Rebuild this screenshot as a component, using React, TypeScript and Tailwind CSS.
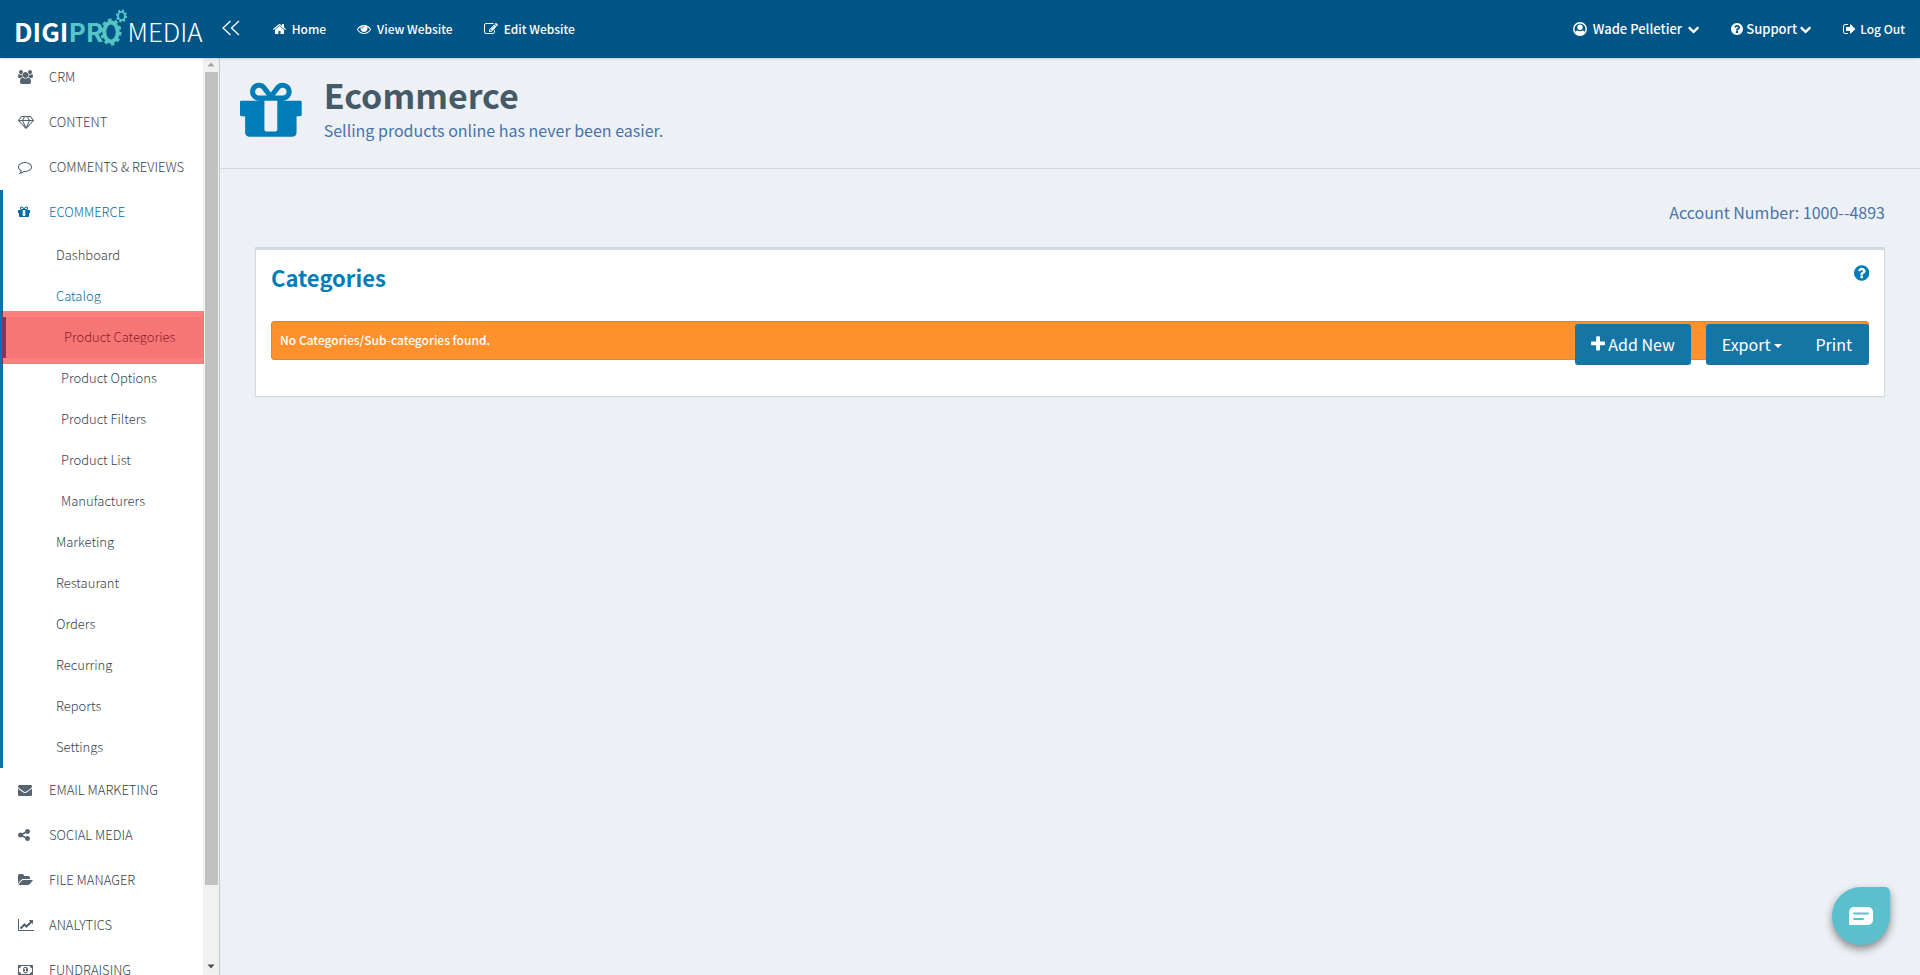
import React from 'react';

interface IconProps {
    name: keyof typeof icons;
    className?: string;
}

// [viewBox, path]
const icons = {
    users: ['-64 0 1920 1792', 'M529 896q-162 5-265 128h-134q-82 0-138-40.5t-56-118.5q0-353 124-353 6 0 43.5 21t97.5 42.5 119 21.5q67 0 133-23-5 37-5 66 0 139 81 256zm1071 637q0 120-73 189.5t-194 69.5h-874q-121 0-194-69.5t-73-189.5q0-53 3.5-103.5t14-109 26.5-108.5 43-97.5 62-81 85.5-53.5 111.5-20q10 0 43 21.5t73 48 107 48 135 21.5 135-21.5 107-48 73-48 43-21.5q61 0 111.5 20t85.5 53.5 62 81 43 97.5 26.5 108.5 14 109 3.5 103.5zm-1024-1277q0 106-75 181t-181 75-181-75-75-181 75-181 181-75 181 75 75 181zm704 384q0 159-112.5 271.5t-271.5 112.5-271.5-112.5-112.5-271.5 112.5-271.5 271.5-112.5 271.5 112.5 112.5 271.5zm576 225q0 78-56 118.5t-138 40.5h-134q-103-123-265-128 81-117 81-256 0-29-5-66 66 23 133 23 59 0 119-21.5t97.5-42.5 43.5-21q124 0 124 353zm-128-609q0 106-75 181t-181 75-181-75-75-181 75-181 181-75 181 75 75 181z'],
    diamond: ['0 0 2048 1792', 'M212 768l623 665-300-665h-323zM1024 1540l349-772h-698zM538 640l204-384h-262l-288 384h346zM1213 1433l623-665h-323zM683 640h682l-204-384h-274zM1510 640h346l-288-384h-262zM1651 154l384 512q14 18 13 41.500t-17 40.500l-960 1024q-18 20-47 20t-47-20l-960-1024q-16-17-17-40.500t13-41.500l384-512q18-26 51-26h1152q33 0 51 26z'],
    comment: ['0 0 1792 1792', 'M896 384q-204 0-381.5 69.5t-282 187.5-104.5 255q0 112 71.5 213.500t201.500 175.500l87 50-27 96q-24 91-70 172 152-63 275-171l43-38 57 6q69 8 130 8 204 0 381.500-69.500t282-187.500 104.500-255-104.500-255-282-187.500-381.500-69.500zm896 512q0 174-120 321.500t-326 233-450 85.500q-70 0-145-8-198 175-460 242-49 14-114 22h-5q-15 0-27-10.500t-16-27.500v-1q-3-4-.5-12t2-10 4.500-9.500l6-9 7-8.500 8-9q7-8 31-34.500t34.500-38 31-39.500 32.500-51 27-59 26-76q-157-89-247.500-220t-90.500-281q0-174 120-321.500t326-233 450-85.500 450 85.500 326 233 120 321.500z'],
    gift: ['128 0 1536 1792', 'M1056 1356v-716h-320v716q0 25 18 38.500t46 13.500h192q28 0 46-13.500t18-38.500zm-456-844h195l-126-161q-26-31-69-31-40 0-68 28t-28 68 28 68 68 28zm688-96q0-40-28-68t-68-28q-43 0-69 31l-125 161h194q40 0 68-28t28-68zm376 256v320q0 14-9 23t-23 9h-96v416q0 40-28 68t-68 28h-1088q-40 0-68-28t-28-68v-416h-96q-14 0-23-9t-9-23v-320q0-14 9-23t23-9h440q-93 0-158.500-65.500t-65.500-158.500 65.500-158.500 158.500-65.500q107 0 168 77l128 165 128-165q61-77 168-77 93 0 158.500 65.500t65.500 158.500-65.500 158.500-158.500 65.500h440q14 0 23 9t9 23z'],
    envelope: ['0 0 1792 1792', 'M1792 710v794q0 66-47 113t-113 47h-1472q-66 0-113-47t-47-113v-794q44 49 101 87 362 246 497 345 57 42 92.500 65.500t94.500 48 110 24.500h2q51 0 110-24.500t94.500-48 92.500-65.500q170-123 498-345 57-39 100-87zm0-294q0 79-49 151t-122 123q-376 261-468 325-10 7-42.500 30.500t-54 38-52 32.500-57.500 27-50 9h-2q-23 0-50-9t-57.500-27-52-32.500-54-38-42.500-30.500q-91-64-262-182.500t-205-142.500q-62-42-117-115.500t-55-136.500q0-78 41.500-130t118.500-52h1472q65 0 112.500 47t47.500 113z'],
    share: ['128 0 1536 1792', 'M1344 1024q133 0 226.500 93.500t93.500 226.500-93.500 226.500-226.500 93.500-226.500-93.500-93.500-226.500q0-12 2-34l-360-180q-92 86-218 86-133 0-226.500-93.500t-93.500-226.500 93.500-226.500 226.500-93.500q126 0 218 86l360-180q-2-22-2-34 0-133 93.500-226.500t226.500-93.500 226.500 93.500 93.500 226.500-93.500 226.500-226.500 93.500q-126 0-218-86l-360 180q2 22 2 34t-2 34l360 180q92-86 218-86z'],
    folder: ['0 0 1920 1792', 'M1879 952q0 31-31 66l-336 396q-43 51-120.500 86.500t-143.500 35.500h-1088q-34 0-60.500-13t-26.500-43q0-31 31-66l336-396q43-51 120.500-86.500t143.500-35.500h1088q34 0 60.500 13t26.500 43zm-343-344v160h-832q-94 0-197 47.500t-164 119.500l-337 396-5 6q0-4-.5-12.500t-.5-12.500v-960q0-92 66-158t158-66h320q92 0 158 66t66 158v32h544q92 0 158 66t66 158z'],
    chart: ['0 0 2048 1792', 'M2048 1536v128h-2048v-1536h128v1408h1920zm-128-1248v435q0 21-19.500 29.500t-35.500-7.500l-121-121-633 633q-10 10-23 10t-23-10l-233-233-416 416-192-192 585-585q10-10 23-10t23 10l233 233 464-464-121-121q-16-16-7.500-35.500t29.500-19.500h435q14 0 23 9t9 23z'],
    money: ['0 0 1920 1792', 'M768 1152h384v-96h-128v-448h-114l-148 137 77 80q42-37 55-57h2v288h-128v96zm512-256q0 70-21 142t-59.500 134-101.500 101-138 39-138-39-101.500-101-59.500-134-21-142 21-142 59.500-134 101.500-101 138-39 138 39 101.500 101 59.500 134 21 142zm512 256v-512q-106 0-181-75t-75-181h-1152q0 106-75 181t-181 75v512q106 0 181 75t75 181h1152q0-106 75-181t181-75zm128-832v1152q0 26-19 45t-45 19h-1792q-26 0-45-19t-19-45v-1152q0-26 19-45t45-19h1792q26 0 45 19t19 45z'],
    home: ['64 0 1664 1792', 'M1472 992v480q0 26-19 45t-45 19h-384v-384h-256v384h-384q-26 0-45-19t-19-45v-480q0-1 .5-3t.5-3l575-474 575 474q1 2 1 6zm223-69l-62 74q-8 9-21 11h-3q-13 0-21-7l-692-577-692 577q-12 8-24 7-13-2-21-11l-62-74q-8-10-7-23.500t11-21.500l719-599q32-26 76-26t76 26l244 204v-195q0-14 9-23t23-9h192q14 0 23 9t9 23v408l219 182q10 8 11 21.500t-7 23.500z'],
    eye: ['0 0 1792 1792', 'M1664 960q-152-236-381-353 61 104 61 225 0 185-131.500 316.500t-316.500 131.500-316.500-131.500-131.500-316.500q0-121 61-225-229 117-381 353 133 205 333.500 326.500t434.500 121.500 434.500-121.500 333.500-326.500zm-720-384q0-20-14-34t-34-14q-125 0-214.500 89.500t-89.500 214.500q0 20 14 34t34 14 34-14 14-34q0-86 61-147t147-61q20 0 34-14t14-34zm848 384q0 34-20 69-140 230-376.500 368.500t-499.500 138.500-499.500-139-376.500-368q-20-35-20-69t20-69q140-229 376.500-368t499.500-139 499.500 139 376.500 368q20 35 20 69z'],
    edit: ['0 0 1792 1792', 'M888 1184l116-116-152-152-116 116v56h96v96h56zm440-720q-16-16-33 1l-350 350q-17 17-1 33t33-1l350-350q17-17 1-33zm80 594v190q0 119-84.500 203.500t-203.500 84.500h-832q-119 0-203.500-84.500t-84.500-203.500v-832q0-119 84.500-203.500t203.500-84.500h832q63 0 117 25 15 7 18 23 3 17-9 29l-49 49q-14 14-32 8-23-6-45-6h-832q-66 0-113 47t-47 113v832q0 66 47 113t113 47h832q66 0 113-47t47-113v-126q0-13 9-22l64-64q15-15 35-7t20 29zm-96-738l288 288-672 672h-288v-288zm444 132l-92 92-288-288 92-92q28-28 68-28t68 28l152 152q28 28 28 68t-28 68z'],
    signOut: ['64 0 1664 1792', 'M704 1440q0 4 1 20t.5 26.500-3 23.500-10 19.500-20.500 6.500h-320q-119 0-203.500-84.500t-84.500-203.500v-704q0-119 84.500-203.500t203.500-84.500h320q13 0 22.500 9.500t9.500 22.500q0 4 1 20t.5 26.500-3 23.500-10 19.500-20.500 6.500h-320q-66 0-113 47t-47 113v704q0 66 47 113t113 47h312l11.500 1 11.500 3 8 5.500 7 9 2 13.500zm928-544q0 26-19 45l-544 544q-19 19-45 19t-45-19-19-45v-288h-448q-26 0-45-19t-19-45v-384q0-26 19-45t45-19h448v-288q0-26 19-45t45-19 45 19l544 544q19 19 19 45z'],
    question: ['128 0 1536 1792', 'M1024 1376v-192q0-14-9-23t-23-9h-192q-14 0-23 9t-9 23v192q0 14 9 23t23 9h192q14 0 23-9t9-23zm256-672q0-88-55.500-163t-138.500-116-170-41q-243 0-371 213-15 24 8 42l132 100q7 6 19 6 16 0 25-12 53-68 86-92 34-24 86-24 48 0 85.500 26t37.500 59q0 38-20 61t-68 45q-63 28-115.500 86.500t-52.500 125.500v36q0 14 9 23t23 9h192q14 0 23-9t9-23q0-19 21.500-49.500t54.500-49.500q32-18 49-28.500t46-35 44.500-48 28-60.500 12.500-81zm384 192q0 209-103 385.500t-279.500 279.500-385.500 103-385.500-103-279.500-279.500-103-385.500 103-385.500 279.500-279.500 385.500-103 385.500 103 279.500 279.500 103 385.500z'],
    chevron: ['64 0 1664 1792', 'M1683 808l-742 741q-19 19-45 19t-45-19l-742-741q-19-19-19-45.500t19-45.500l166-165q19-19 45-19t45 19l531 531 531-531q19-19 45-19t45 19l166 165q19 19 19 45.500t-19 45.500z'],
    plus: ['192 0 1408 1792', 'M1600 736v192q0 40-28 68t-68 28h-416v416q0 40-28 68t-68 28h-192q-40 0-68-28t-28-68v-416h-416q-40 0-68-28t-28-68v-192q0-40 28-68t68-28h416v-416q0-40 28-68t68-28h192q40 0 68 28t28 68v416h416q40 0 68 28t28 68z'],
    user: ['0 0 1792 1792', 'M896 0a896 896 0 1 0 0 1792a896 896 0 1 0 0-1792zM896 190a706 706 0 0 1 610 1060q-110-130-300-150q-110 90-310 90t-310-90q-190 20-300 150a706 706 0 0 1 610-1060zM896 330a350 350 0 1 1 0 700a350 350 0 1 1 0-700z'],
};

const Icon: React.FC<IconProps> = ({ name, className = 'h-3.5' }) => (
    <svg viewBox={icons[name][0]} className={`shrink-0 ${className}`} fill="currentColor" fillRule={name === 'diamond' || name === 'user' ? 'evenodd' : 'nonzero'} aria-hidden="true">
        <path d={icons[name][1]} />
    </svg>
);

const Logo = () => (
    <a href="#" aria-label="DigiPro Media" className="flex items-center text-[26px] leading-8 text-white">
        <span className="pt-1 font-bold">DIGI</span>
        <span className="pt-1 font-bold text-[#56c5c8]">PR</span>
        <svg viewBox="0 0 28 40" className="-ml-1 mb-1.5 h-10 w-7" fill="none" stroke="#56c5c8" aria-hidden="true">
            <ellipse cx="12" cy="26" rx="6.700" ry="9.500" strokeWidth="4" />
            <ellipse cx="12" cy="26" rx="9" ry="12" strokeWidth="3" strokeDasharray="3.400 3.250" />
            <ellipse cx="22.500" cy="10" rx="3.400" ry="4.200" strokeWidth="2" />
            <ellipse cx="22.500" cy="10" rx="4.700" ry="5.600" strokeWidth="1.800" strokeDasharray="2 2.050" />
        </svg>
        <span className="pt-1 font-light">MEDIA</span>
    </a>
);

const sections: { icon: keyof typeof icons; label: string }[] = [
    { icon: 'users', label: 'CRM' },
    { icon: 'diamond', label: 'CONTENT' },
    { icon: 'comment', label: 'COMMENTS & REVIEWS' },
    { icon: 'gift', label: 'ECOMMERCE' },
    { icon: 'envelope', label: 'EMAIL MARKETING' },
    { icon: 'share', label: 'SOCIAL MEDIA' },
    { icon: 'folder', label: 'FILE MANAGER' },
    { icon: 'chart', label: 'ANALYTICS' },
    { icon: 'money', label: 'FUNDRAISING' },
];

const catalog = ['Product Categories', 'Product Options', 'Product Filters', 'Product List', 'Manufacturers'];
const afterCatalog = ['Marketing', 'Restaurant', 'Orders', 'Recurring', 'Reports', 'Settings'];

const SubLink = ({ label, className = 'pl-[53px]' }: { label: string; className?: string }) => (
    <li>
        <a href="#" className={`flex h-[41px] items-center pb-0.5 ${className}`}>{label}</a>
    </li>
);

const EcommerceMenu = () => (
    <ul>
        <SubLink label="Dashboard" />
        <SubLink label="Catalog" className="pl-[53px] text-[#006fa8]" />
        {catalog.map((label, i) =>
            i === 0 ? (
                <li key={label} className="relative">
                    <a href="#" className="flex h-[41px] items-center border-l-[3px] border-[#0073aa] bg-[#ededed] pb-0.5 pl-[58px] text-[#0c3f5c]">{label}</a>
                    {/* highlight over the current entry */}
                    <div className="pointer-events-none absolute -inset-y-1.5 -left-px -right-px bg-[#ff0000]/50" />
                </li>
            ) : (
                <SubLink key={label} label={label} className="pl-[58px]" />
            )
        )}
        {afterCatalog.map((label) => <SubLink key={label} label={label} />)}
    </ul>
);

const Sidebar = () => (
    <aside className="flex w-[220px] shrink-0 overflow-hidden border-r border-[#c4c9cd] bg-white text-[13px] font-light text-[#35424c]">
        <nav className="min-w-0 flex-1">
            <ul className="-mt-[3px]">
                {sections.map(({ icon, label }) => {
                    const open = label === 'ECOMMERCE';
                    return (
                        <li key={label} className={open ? 'border-l-[3px] border-[#0073aa]' : 'border-l-[3px] border-transparent'}>
                            <a href="#" className={open ? 'flex h-[45px] items-center pb-0.5 pl-[15px] text-[#006fa8]' : 'flex h-[45px] items-center pb-0.5 pl-[15px]'}>
                                <span className={open ? 'w-[31px]' : 'w-[31px] text-[#57646e]'}><Icon name={icon} /></span>
                                {label}
                            </a>
                            {open && <EcommerceMenu />}
                        </li>
                    );
                })}
            </ul>
        </nav>
        <div className="flex w-4 flex-col items-center bg-[#f1f1f1]" aria-hidden="true">
            <svg viewBox="0 0 14 14" className="h-3.5 w-3.5 shrink-0"><path d="M3.500 8.500L7 4.500l3.500 4z" fill="#a3a3a3" /></svg>
            <div className="w-[13px] flex-[11] bg-[#c1c1c1]" />
            <div className="flex-[1]" />
            <svg viewBox="0 0 14 14" className="mb-0.5 h-3.5 w-3.5 shrink-0"><path d="M3.500 5.500h7L7 9.500z" fill="#505050" /></svg>
        </div>
    </aside>
);

const Header = () => (
    <header className="relative flex h-[58px] shrink-0 items-center justify-between bg-[#005587] pl-3.5 pr-[15px] text-[12px] font-medium text-white shadow">
        <div className="flex items-center">
            <Logo />
            <button type="button" aria-label="Collapse menu" className="mb-0.5 ml-[18px]">
                <svg viewBox="0 0 20 16" className="h-4 w-5" fill="none" stroke="currentColor" strokeWidth="1.300">
                    <path d="M9.500 1L2 8l7.500 7M18 1l-7.500 7L18 15" />
                </svg>
            </button>
            <nav className="ml-8 flex items-center gap-[31px]">
                <a href="#" className="flex items-center gap-1.5"><Icon name="home" />Home</a>
                <a href="#" className="flex items-center gap-1.5"><Icon name="eye" />View Website</a>
                <a href="#" className="flex items-center gap-1.5"><Icon name="edit" />Edit Website</a>
            </nav>
        </div>
        <nav className="flex items-center gap-8">
            <button type="button" className="flex items-center gap-1.5 text-[13px]"><Icon name="user" /><span>Wade Pelletier</span><Icon name="chevron" className="h-3" /></button>
            <button type="button" className="flex items-center gap-[3px] text-[13px]"><Icon name="question" /><span>Support</span><Icon name="chevron" className="h-3" /></button>
            <a href="#" className="flex items-center gap-1"><Icon name="signOut" />Log Out</a>
        </nav>
    </header>
);

const CategoriesCard = () => (
    <section className="border border-t-[3px] border-[#d0dbe1] bg-white px-[15px] pb-[31px] shadow-xs">
        <div className="flex items-start justify-between pt-3">
            <h2 className="text-[22px] font-bold leading-[30px] text-[#007db8]">Categories</h2>
            <button type="button" aria-label="Help" className="mt-0.5 text-[#007db8]"><Icon name="question" className="h-[18px]" /></button>
        </div>
        <div role="alert" className="mt-[29px] flex h-[39px] items-center rounded-[3px] border border-[#e5842c] bg-[#ff912d] px-2 pb-0.5 text-[12px] font-medium text-white">
            No Categories/Sub-categories found.
        </div>
        {/* toolbar sits over the alert */}
        <div className="relative -mt-9 flex justify-end gap-[15px] text-[16px] leading-6 text-white">
            <button type="button" className="flex h-[41px] items-center gap-[3px] rounded-[3px] bg-[#1576a6] px-4 pb-0.5"><Icon name="plus" className="h-[18px]" />Add New</button>
            <div className="flex h-[41px] rounded-[3px] bg-[#1576a6]">
                <button type="button" className="flex items-center gap-1 px-4 pb-0.5">
                    Export
                    <svg viewBox="0 0 8 4" className="mt-1 h-1 w-2" fill="currentColor" aria-hidden="true"><path d="M0 0h8L4 4z" /></svg>
                </button>
                <button type="button" className="px-[17px] pb-0.5">Print</button>
            </div>
        </div>
    </section>
);

export default function App() {
    return (
        <div className="flex h-screen flex-col overflow-hidden bg-[#edf1f5] font-['Noto_Sans_CJK_SC',sans-serif]">
            <Header />
            <div className="flex min-h-0 flex-1">
                <Sidebar />
                <main className="min-w-0 flex-1">
                    <div className="flex h-[111px] gap-[22px] border-b border-[#d3d9dd] pl-5 pt-4">
                        <Icon name="gift" className="mt-px h-[72px] text-[#007db8]" />
                        <div>
                            <h1 className="text-[34px] font-bold leading-[42px] text-[#455967]">Ecommerce</h1>
                            <p className="mt-0.5 text-[16px] leading-6 text-[#4a72ab]">Selling products online has never been easier.</p>
                        </div>
                    </div>
                    <div className="px-[35px] pt-[31px]">
                        <p className="mb-[23px] text-right text-[16px] leading-6 text-[#4a72ab]">Account Number: 1000--4893</p>
                        <CategoriesCard />
                    </div>
                </main>
            </div>
            <button type="button" aria-label="Open chat" className="fixed bottom-[30px] right-[30px] flex size-[58px] items-center justify-center rounded-[29px] rounded-tr-[5px] bg-[#5bbfcd] shadow-[0_4px_8px_rgba(0,0,0,0.45)]">
                <svg viewBox="0 0 24 18" className="h-[18px] w-6" aria-hidden="true">
                    <path d="M5 0h14a5 5 0 0 1 5 5v8a5 5 0 0 1-5 5H1a1 1 0 0 1-1-1V5a5 5 0 0 1 5-5z" fill="#fff" />
                    <path d="M5 6.500h14M5 12h9" stroke="#5bbfcd" strokeWidth="2" strokeLinecap="round" />
                </svg>
            </button>
        </div>
    );
}
